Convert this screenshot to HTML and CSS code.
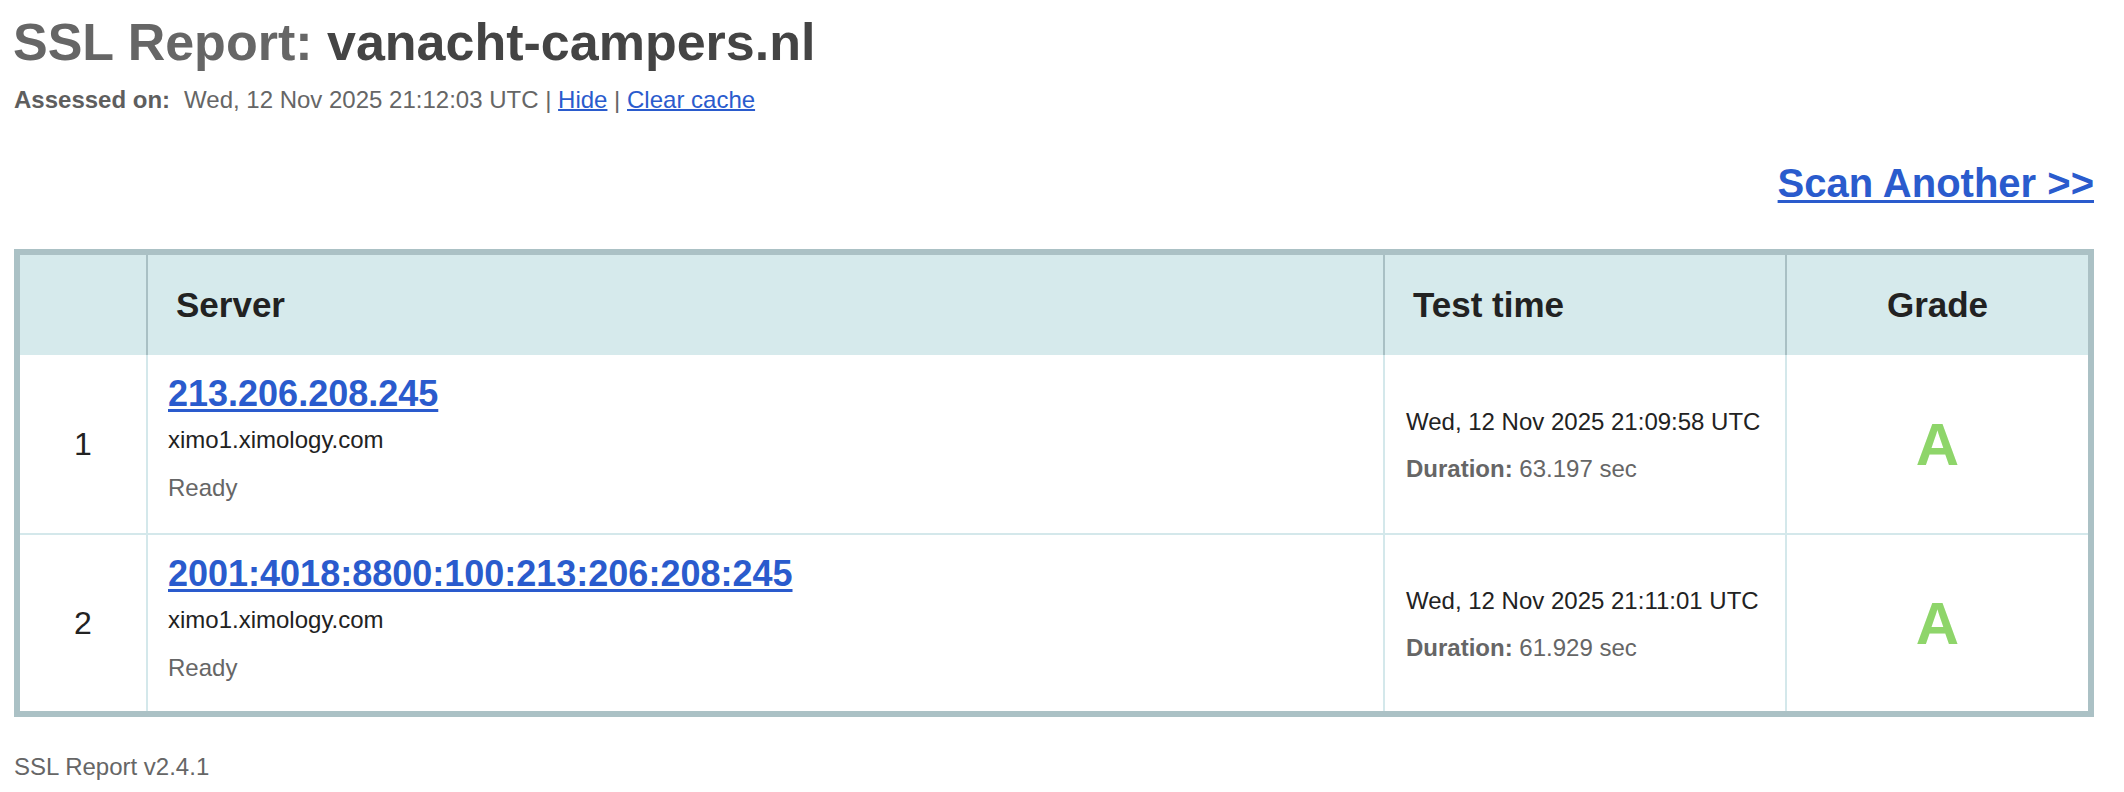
FILE: index.html
```html
<!DOCTYPE html>
<html lang="en">
<head>
<meta charset="utf-8">
<title>SSL Report: vanacht-campers.nl</title>
<link rel="stylesheet" href="styles.css">
</head>
<body>
<div class="page">
  <h1 class="report-title"><span class="title-label">SSL Report:</span> <span class="title-domain">vanacht-campers.nl</span></h1>
  <div class="assessed">
    <span class="assessed-label">Assessed on:</span><span class="assessed-date">Wed, 12 Nov 2025 21:12:03 UTC</span> | <a href="#">Hide</a> | <a href="#">Clear cache</a>
  </div>
  <div class="scan-row"><a class="scan-link" href="#">Scan Another &gt;&gt;</a></div>

  <table class="results">
    <thead>
      <tr>
        <th class="c-num"></th>
        <th class="c-server">Server</th>
        <th class="c-time">Test time</th>
        <th class="c-grade">Grade</th>
      </tr>
    </thead>
    <tbody>
      <tr>
        <td class="c-num">1</td>
        <td class="c-server">
          <div class="ip"><a href="#">213.206.208.245</a></div>
          <div class="host">ximo1.ximology.com</div>
          <div class="status">Ready</div>
        </td>
        <td class="c-time">
          <div class="date">Wed, 12 Nov 2025 21:09:58 UTC</div>
          <div class="duration"><b>Duration:</b> 63.197 sec</div>
        </td>
        <td class="c-grade"><span class="grade">A</span></td>
      </tr>
      <tr>
        <td class="c-num">2</td>
        <td class="c-server">
          <div class="ip"><a href="#">2001:4018:8800:100:213:206:208:245</a></div>
          <div class="host">ximo1.ximology.com</div>
          <div class="status">Ready</div>
        </td>
        <td class="c-time">
          <div class="date">Wed, 12 Nov 2025 21:11:01 UTC</div>
          <div class="duration"><b>Duration:</b> 61.929 sec</div>
        </td>
        <td class="c-grade"><span class="grade">A</span></td>
      </tr>
    </tbody>
  </table>

  <div class="footer">SSL Report v2.4.1</div>
</div>
</body>
</html>
```

FILE: styles.css
```css
html, body {
  margin: 0;
  padding: 0;
  background: #ffffff;
}

body {
  font-family: "Liberation Sans", Arial, sans-serif;
  color: #222222;
}

a {
  color: #2a5bcd;
}

.page {
  width: 2080px;
  padding: 12px 0 0 14px;
}

.report-title {
  margin: 0 0 0 -1px;
  font-size: 52px;
  line-height: 60px;
  font-weight: bold;
}

.title-label {
  color: #666666;
}

.title-domain {
  color: #444444;
}

.assessed {
  margin-top: 14px;
  font-size: 24px;
  line-height: 28px;
  color: #666666;
}

.assessed-label {
  font-weight: bold;
  color: #5e5e5e;
  margin-right: 14px;
}

.assessed a {
  text-decoration-thickness: 1.5px;
}

.scan-row {
  margin-top: 46px;
  text-align: right;
  font-size: 40px;
  line-height: 46px;
  font-weight: bold;
}

.scan-link {
  text-decoration-thickness: 3px;
  text-underline-offset: 3px;
}

.results {
  margin-top: 43px;
  width: 2080px;
  table-layout: fixed;
  border-collapse: separate;
  border-spacing: 0;
  border: 6px solid #abc1c5;
}

.results th,
.results td {
  box-sizing: border-box;
  padding: 0;
}

.results th {
  height: 100px;
  background: #d6eaec;
  font-size: 35px;
  font-weight: bold;
  color: #222222;
  text-align: left;
  vertical-align: middle;
  padding-left: 28px;
  border-left: 2px solid #a9c0c4;
}

.results th.c-num {
  width: 126px;
  border-left: none;
  padding: 0;
}

.results th.c-server {
  width: 1237px;
}

.results th.c-time {
  width: 402px;
}

.results th.c-grade {
  width: 303px;
  text-align: center;
  padding-left: 0;
}

.results td {
  height: 178px;
  vertical-align: middle;
  border-left: 2px solid #d4e8eb;
  border-top: 2px solid #d4e8eb;
}

.results tbody tr:first-child td {
  border-top: none;
}

.results td.c-num {
  border-left: none;
  text-align: center;
  font-size: 32px;
  color: #222222;
}

.results td.c-server {
  vertical-align: top;
  padding: 19px 20px 0 20px;
}

.ip {
  font-size: 36px;
  line-height: 40px;
  font-weight: bold;
}

.ip a {
  text-decoration-thickness: 3px;
  text-underline-offset: 3px;
}

.host {
  margin-top: 12px;
  font-size: 24px;
  line-height: 28px;
  color: #222222;
}

.status {
  margin-top: 20px;
  font-size: 24px;
  line-height: 28px;
  color: #666666;
}

.results td.c-time {
  padding: 3px 20px 0 21px;
}

.date {
  font-size: 24px;
  line-height: 28px;
  color: #222222;
}

.duration {
  margin-top: 19px;
  font-size: 24px;
  line-height: 28px;
  color: #666666;
}

.duration b {
  color: #666666;
}

.results td.c-grade {
  text-align: center;
}

.grade {
  font-size: 60px;
  font-weight: bold;
  color: #8ed56a;
}

.footer {
  margin-top: 36px;
  font-size: 24px;
  line-height: 28px;
  color: #666666;
}
```
